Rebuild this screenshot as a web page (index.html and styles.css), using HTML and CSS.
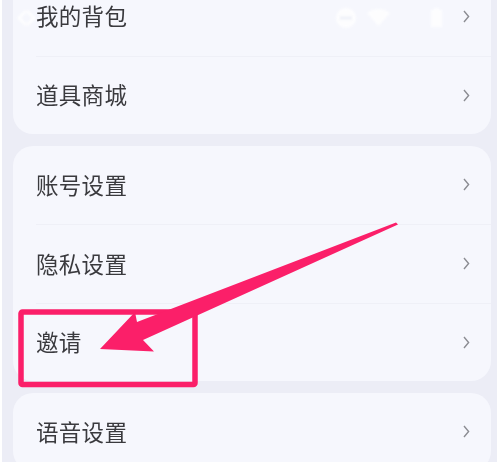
FILE: index.html
```html
<!DOCTYPE html>
<html lang="zh-CN">
<head>
<meta charset="utf-8">
<title>设置</title>
<link rel="stylesheet" href="styles.css">
</head>
<body>
<main class="screen">
  <section class="card card-first">
    <div class="row"><span class="label">我的背包</span><svg class="chev" viewBox="0 0 7 13"><path d="M1 1l4.600 5.500L1 12"/></svg></div>
    <div class="row"><span class="label">道具商城</span><svg class="chev" viewBox="0 0 7 13"><path d="M1 1l4.600 5.500L1 12"/></svg></div>
  </section>
  <section class="card">
    <div class="row"><span class="label">账号设置</span><svg class="chev" viewBox="0 0 7 13"><path d="M1 1l4.600 5.500L1 12"/></svg></div>
    <div class="row"><span class="label">隐私设置</span><svg class="chev" viewBox="0 0 7 13"><path d="M1 1l4.600 5.500L1 12"/></svg></div>
    <div class="row"><span class="label">邀请</span><svg class="chev" viewBox="0 0 7 13"><path d="M1 1l4.600 5.500L1 12"/></svg></div>
  </section>
  <section class="card">
    <div class="row"><span class="label">语音设置</span><svg class="chev" viewBox="0 0 7 13"><path d="M1 1l4.600 5.500L1 12"/></svg></div>
  </section>
</main>

<svg class="status" viewBox="0 0 497 40" aria-hidden="true">
  <path class="status-line" d="M26 11l-7 7 7 7M27 11l7 7-7 7"/>
  <circle cx="346" cy="18" r="10"/>
  <rect class="status-cut" x="340" y="16.500" width="12" height="3"/>
  <path d="M367 13q11.500-8 23 0l-11.500 13z"/>
  <path d="M431 10h3v-2h5v2h3v17h-11z"/>
</svg>

<svg class="callout" viewBox="0 0 497 462" aria-hidden="true">
  <rect class="callout-box" x="21" y="312" width="174" height="72.500" rx="1.500"/>
  <path class="callout-arrow" d="M396 222.500L398 224.500L143 340L154 351.500L100 349L135 312L137 322Z"/>
</svg>
</body>
</html>
```
FILE: styles.css
```css
html, body {
  margin: 0;
  height: 100%;
  overflow: hidden;
  background: #ffffff;
}

.screen {
  display: flex;
  flex-direction: column;
  gap: 11.500px;
  height: 462px;
  margin-left: 2px;
  padding: 0 6px 0 11px;
  box-sizing: border-box;
  overflow: hidden;
  background: #ecedf6;
  filter: blur(0.5px);
  font-family: "Noto Sans CJK SC", "Noto Sans", sans-serif;
}

.card {
  flex: none;
  background: #f6f7fd;
  border-radius: 20px;
}

.card-first {
  margin-top: -23px;
}

.row {
  display: flex;
  align-items: center;
  justify-content: space-between;
  height: 78.500px;
  margin-left: 23px;
  padding-right: 21px;
  box-sizing: border-box;
  font-size: 22.500px;
  letter-spacing: 0.300px;
  color: #3a3a3e;
}

.row + .row {
  border-top: 1px solid #eff0f7;
}

.label {
  margin-bottom: 2px;
}

.chev {
  width: 7px;
  height: 13px;
  fill: none;
  stroke: #8b8c92;
  stroke-width: 1.400;
}

.status {
  position: absolute;
  left: 0;
  top: 0;
  width: 497px;
  height: 40px;
  fill: #ffffff;
  opacity: 0.8;
  filter: blur(1px);
}

.status-line {
  fill: none;
  stroke: #ffffff;
  stroke-width: 3;
}

.status-cut {
  fill: #eef0f8;
}

.callout {
  position: absolute;
  left: 0;
  top: 0;
  width: 497px;
  height: 462px;
}

.callout-box {
  fill: none;
  stroke: #fb1f69;
  stroke-width: 5.500;
}

.callout-arrow {
  fill: #fb1f69;
}
```
